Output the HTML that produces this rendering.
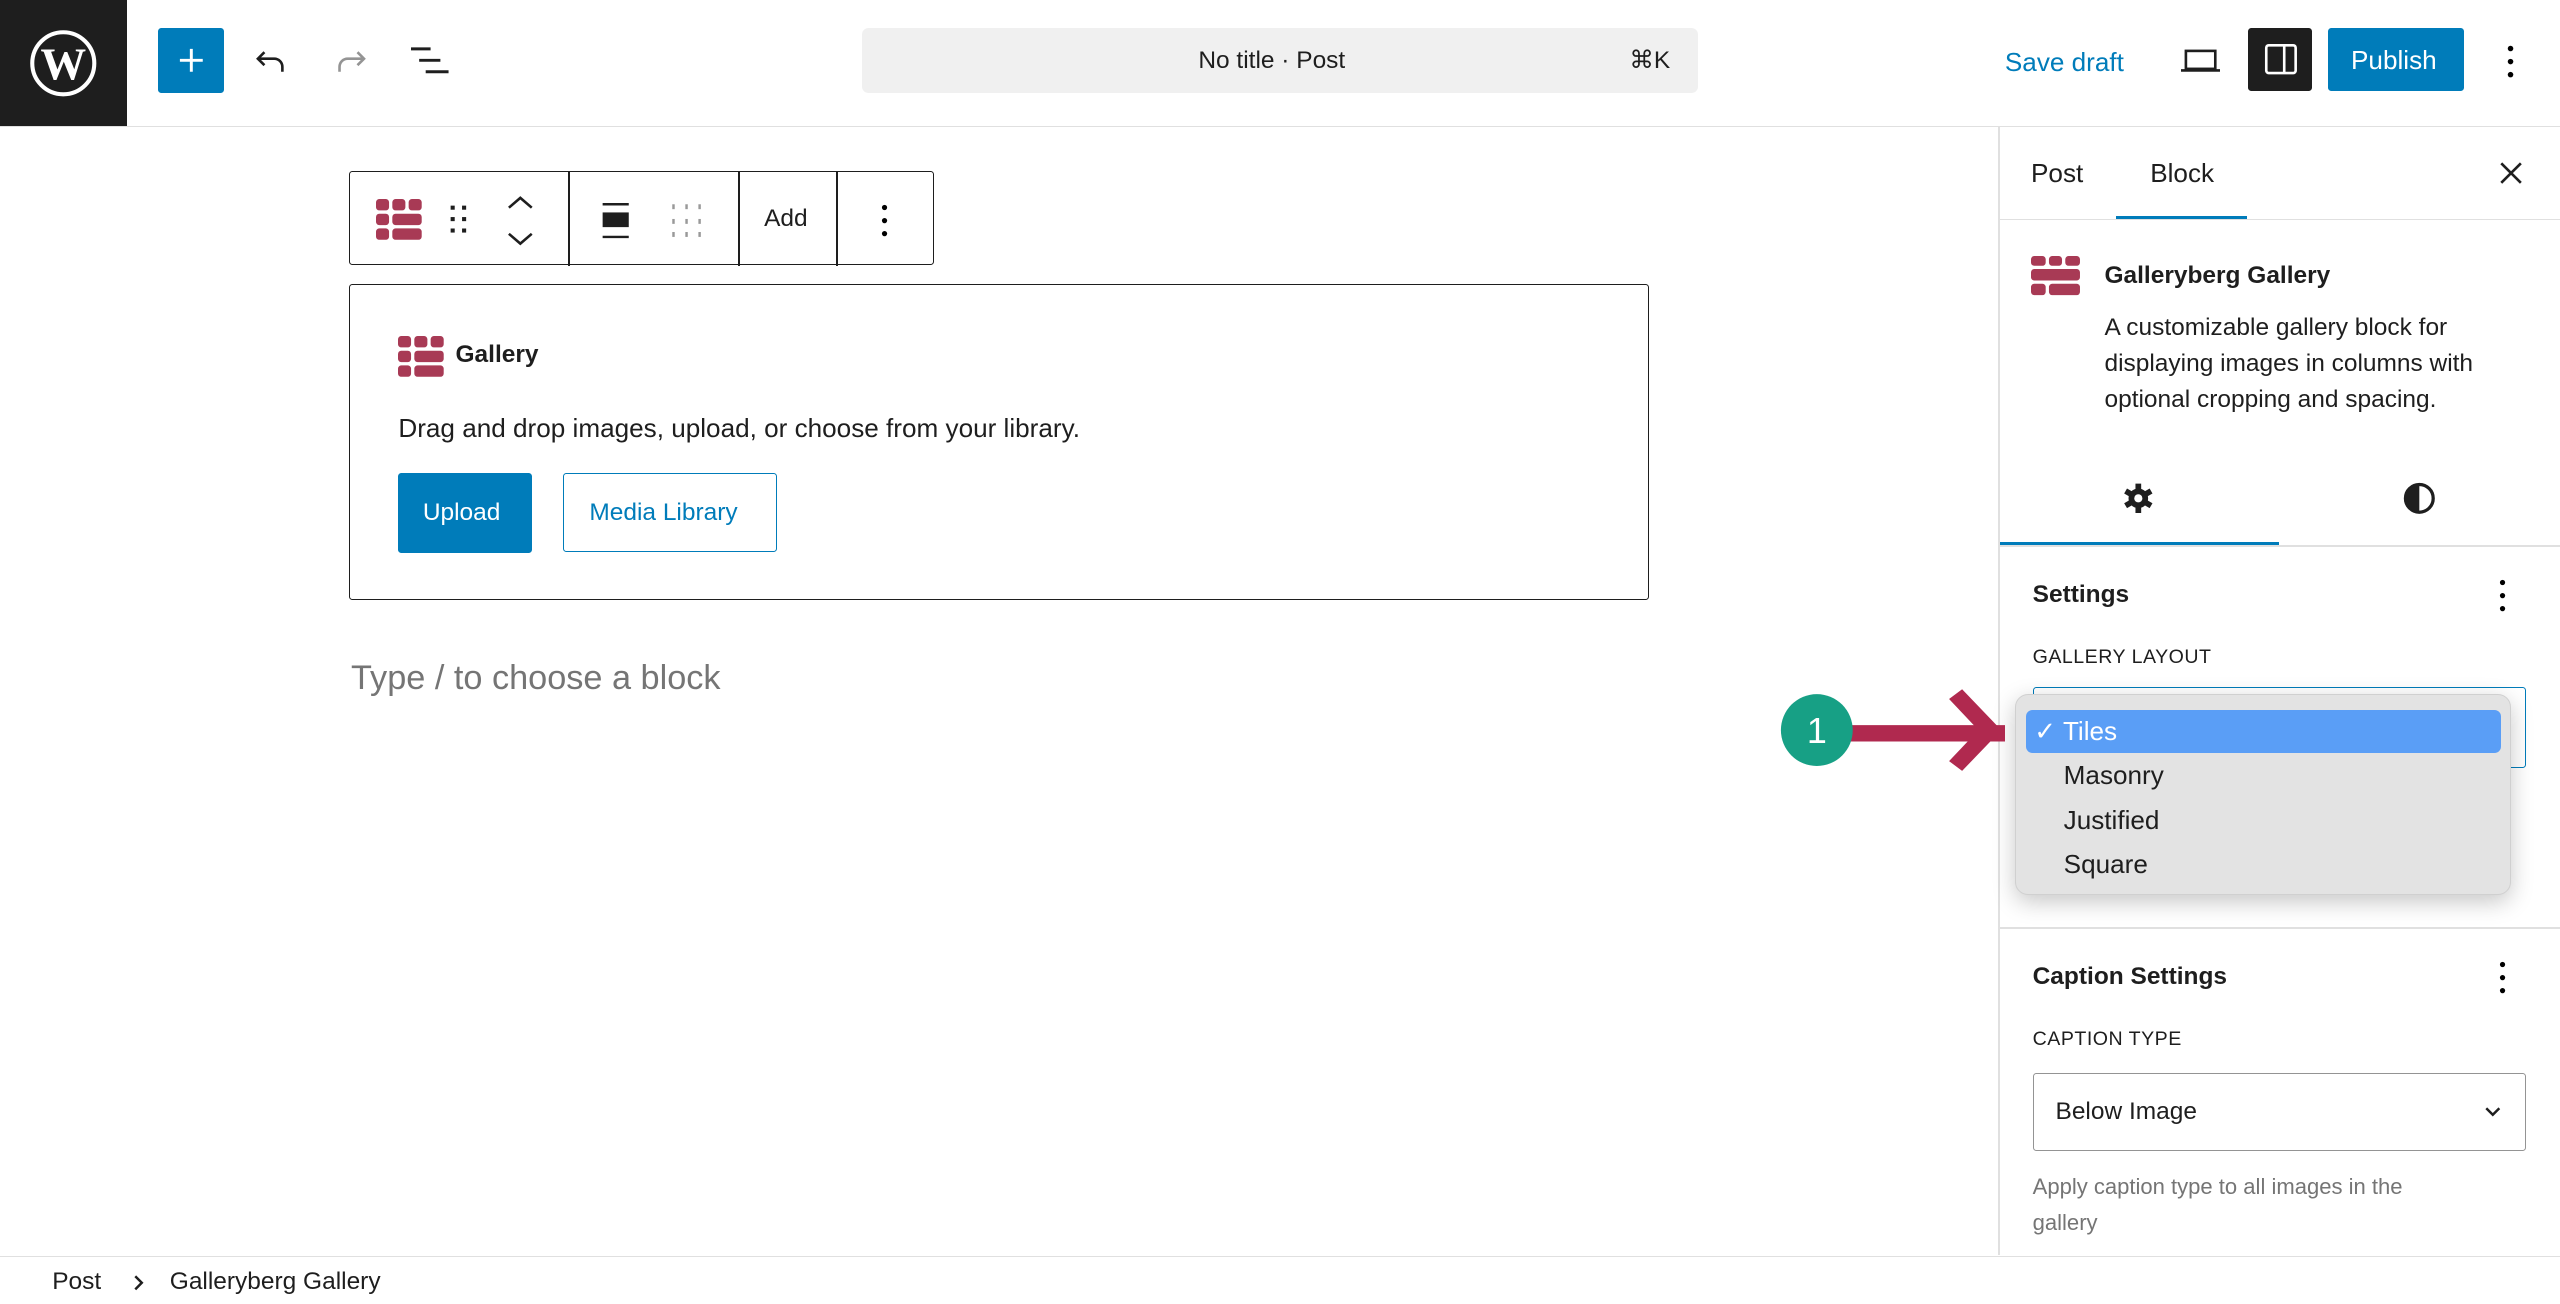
<!DOCTYPE html>
<html><head><meta charset="utf-8">
<style>
html,body{margin:0;padding:0;background:#fff;overflow:hidden}
body{width:2560px;height:1304px}
#r{position:relative;width:1568px;height:799px;zoom:1.632653;font-family:"Liberation Sans",sans-serif;color:#1e1e1e;overflow:hidden}
.a{position:absolute}
.t{position:absolute;white-space:nowrap;line-height:1}
</style></head><body><div id="r">
<!-- top bar -->
<div class="a" style="left:0;top:0;width:1568px;height:77px;border-bottom:1px solid #e0e0e0"></div>
<div class="a" style="left:0;top:0;width:78px;height:77px;background:#1e1e1e"></div>
<svg class="a" style="left:18px;top:18px" width="42" height="42" viewBox="0 0 42 42"><circle cx="21" cy="21" r="19" fill="none" stroke="#fff" stroke-width="2.5"/><text x="21" y="31" text-anchor="middle" font-family="Liberation Serif" font-weight="bold" font-size="28" fill="#fff">W</text></svg>
<div class="a" style="left:97px;top:17px;width:40px;height:40px;background:#007cba;border-radius:2px"></div>
<svg class="a" style="left:107px;top:27px" width="20" height="20"><path d="M10 3v14M3 10h14" stroke="#fff" stroke-width="1.8"/></svg>
<svg class="a" style="left:155px;top:27px" width="22" height="22" viewBox="0 0 22 22"><path d="M7 5L3 9l4 4M3 9h10a5 5 0 0 1 5 5v3" fill="none" stroke="#1e1e1e" stroke-width="1.6"/></svg>
<svg class="a" style="left:204px;top:27px" width="22" height="22" viewBox="0 0 22 22"><path d="M15 5l4 4-4 4M19 9H9a5 5 0 0 0-5 5v3" fill="none" stroke="#949494" stroke-width="1.6"/></svg>
<svg class="a" style="left:252px;top:27px" width="24" height="22"><path d="M0 3h12M5 10h13M9 17h14" stroke="#1e1e1e" stroke-width="1.8"/></svg>
<div class="a" style="left:528px;top:17px;width:512px;height:40px;background:#f0f0f0;border-radius:4px"></div>
<div class="t" style="left:734px;top:30px;font-size:15px">No title · Post</div>
<div class="t" style="left:998px;top:30px;font-size:15px">⌘K</div>
<div class="t" style="left:1228px;top:30px;font-size:16px;color:#007cba">Save draft</div>
<svg class="a" style="left:1336px;top:28px" width="24" height="18"><rect x="3" y="3" width="18" height="11" fill="none" stroke="#1e1e1e" stroke-width="1.6"/><path d="M0 15h24" stroke="#1e1e1e" stroke-width="1.6"/></svg>
<div class="a" style="left:1377px;top:17px;width:39px;height:39px;background:#1e1e1e;border-radius:2px"></div>
<svg class="a" style="left:1386px;top:26px" width="22" height="22"><rect x="2" y="2" width="18" height="17" rx="1.5" fill="none" stroke="#fff" stroke-width="1.6"/><path d="M13 2v17" stroke="#fff" stroke-width="1.6"/></svg>
<div class="a" style="left:1426px;top:17px;width:83px;height:39px;background:#007cba;border-radius:2px"></div>
<div class="t" style="left:1440px;top:29px;font-size:16px;color:#fff">Publish</div>
<svg class="a" style="left:1534px;top:26px" width="8" height="24"><circle cx="4" cy="4" r="1.7"/><circle cx="4" cy="12" r="1.7"/><circle cx="4" cy="20" r="1.7"/></svg>

<!-- editor toolbar -->
<div class="a" style="left:214px;top:105px;width:357px;height:56px;border:1px solid #1e1e1e;border-radius:2px"></div>
<div class="a" style="left:348px;top:105px;width:1px;height:58px;background:#1e1e1e"></div>
<div class="a" style="left:452px;top:105px;width:1px;height:58px;background:#1e1e1e"></div>
<div class="a" style="left:512px;top:105px;width:1px;height:58px;background:#1e1e1e"></div>
<svg class="a" style="left:230px;top:122px" width="30" height="25" viewBox="0 0 30 25"><g fill="#a83a55"><rect x="0" y="0" width="8" height="7" rx="2"/><rect x="10" y="0" width="8" height="7" rx="2"/><rect x="20" y="0" width="8" height="7" rx="2"/><rect x="0" y="9" width="8" height="7" rx="2"/><rect x="10" y="9" width="18" height="7" rx="2"/><rect x="0" y="18" width="8" height="7" rx="2"/><rect x="10" y="18" width="18" height="7" rx="2"/></g></svg>
<svg class="a" style="left:275px;top:125px" width="14" height="20"><g fill="#1e1e1e"><rect x="1" y="1" width="2.5" height="2.5"/><rect x="8" y="1" width="2.5" height="2.5"/><rect x="1" y="8" width="2.5" height="2.5"/><rect x="8" y="8" width="2.5" height="2.5"/><rect x="1" y="15" width="2.5" height="2.5"/><rect x="8" y="15" width="2.5" height="2.5"/></g></svg>
<svg class="a" style="left:309px;top:118px" width="20" height="34"><path d="M3 9l7-6 7 6M3 25l7 6 7-6" fill="none" stroke="#1e1e1e" stroke-width="1.6"/></svg>
<svg class="a" style="left:368px;top:123px" width="20" height="24"><path d="M1 2h16M1 22h16" stroke="#1e1e1e" stroke-width="1.5"/><rect x="1" y="7" width="16" height="9" fill="#1e1e1e"/></svg>
<svg class="a" style="left:410px;top:123px" width="24" height="24"><g fill="#999"><rect x="2" y="2" width="1.5" height="3"/><rect x="10" y="2" width="1.5" height="3"/><rect x="18" y="2" width="1.5" height="3"/><rect x="2" y="11" width="1.5" height="3"/><rect x="10" y="11" width="1.5" height="3"/><rect x="18" y="11" width="1.5" height="3"/><rect x="2" y="19" width="1.5" height="3"/><rect x="10" y="19" width="1.5" height="3"/><rect x="18" y="19" width="1.5" height="3"/></g></svg>
<div class="t" style="left:468px;top:127px;font-size:15px">Add</div>
<svg class="a" style="left:538px;top:123px" width="8" height="24"><circle cx="4" cy="4" r="1.6"/><circle cx="4" cy="12" r="1.6"/><circle cx="4" cy="20" r="1.6"/></svg>

<!-- block -->
<div class="a" style="left:214px;top:174px;width:795px;height:192px;border:1px solid #1e1e1e;border-radius:2px"></div>
<svg class="a" style="left:244px;top:206px" width="30" height="25" viewBox="0 0 30 25"><g fill="#a83a55"><rect x="0" y="0" width="8" height="7" rx="2"/><rect x="10" y="0" width="8" height="7" rx="2"/><rect x="20" y="0" width="8" height="7" rx="2"/><rect x="0" y="9" width="8" height="7" rx="2"/><rect x="10" y="9" width="18" height="7" rx="2"/><rect x="0" y="18" width="8" height="7" rx="2"/><rect x="10" y="18" width="18" height="7" rx="2"/></g></svg>
<div class="t" style="left:279px;top:210px;font-size:15px;font-weight:bold">Gallery</div>
<div class="t" style="left:244px;top:254px;font-size:16px">Drag and drop images, upload, or choose from your library.</div>
<div class="a" style="left:244px;top:290px;width:82px;height:49px;background:#007cba;border-radius:2px"></div>
<div class="t" style="left:259px;top:307px;font-size:15px;color:#fff">Upload</div>
<div class="a" style="left:345px;top:290px;width:130px;height:47px;border:1px solid #007cba;border-radius:2px"></div>
<div class="t" style="left:361px;top:307px;font-size:15px;color:#007cba">Media Library</div>
<div class="t" style="left:215px;top:405px;font-size:21px;color:#757575">Type / to choose a block</div>

<!-- sidebar -->
<div class="a" style="left:1224px;top:77px;width:1px;height:692px;background:#e0e0e0"></div>
<div class="a" style="left:1225px;top:134px;width:343px;height:1px;background:#e0e0e0"></div>
<div class="t" style="left:1244px;top:98px;font-size:16px">Post</div>
<div class="t" style="left:1317px;top:98px;font-size:16px">Block</div>
<div class="a" style="left:1296px;top:132px;width:80px;height:2px;background:#007cba"></div>
<svg class="a" style="left:1530px;top:98px" width="16" height="16"><path d="M2 2l12 12M14 2L2 14" stroke="#1e1e1e" stroke-width="1.6"/></svg>
<svg class="a" style="left:1244px;top:157px" width="30" height="25" viewBox="0 0 30 25"><g fill="#a83a55"><rect x="0" y="0" width="9" height="6" rx="2"/><rect x="11" y="0" width="8" height="6" rx="2"/><rect x="21" y="0" width="9" height="6" rx="2"/><rect x="0" y="8" width="30" height="7" rx="2"/><rect x="0" y="17" width="9" height="7" rx="2"/><rect x="11" y="17" width="19" height="7" rx="2"/></g></svg>
<div class="t" style="left:1289px;top:162px;font-size:15px;font-weight:bold">Galleryberg Gallery</div>
<div class="a" style="left:1289px;top:190px;font-size:15px;line-height:22px;width:270px">A customizable gallery block for displaying images in columns with optional cropping and spacing.</div>
<svg class="a" style="left:1300px;top:295px" width="20" height="20" viewBox="0 0 20 20"><circle cx="10" cy="10" r="6" fill="#1e1e1e"/><g stroke="#1e1e1e" stroke-width="3.5"><path d="M10 1v18M2.2 5.5l15.6 9M2.2 14.5l15.6-9"/></g><circle cx="10" cy="10" r="2.5" fill="#fff"/></svg>
<svg class="a" style="left:1472px;top:295px" width="20" height="20"><circle cx="10" cy="10" r="8.5" fill="none" stroke="#1e1e1e" stroke-width="2"/><path d="M10 1.5a8.5 8.5 0 0 0 0 17z" fill="#1e1e1e"/></svg>
<div class="a" style="left:1225px;top:334px;width:343px;height:1px;background:#e0e0e0"></div>
<div class="a" style="left:1225px;top:332px;width:171px;height:2px;background:#007cba"></div>
<div class="t" style="left:1245px;top:357px;font-size:15px;font-weight:bold">Settings</div>
<svg class="a" style="left:1529px;top:353px" width="8" height="24"><circle cx="4" cy="4" r="1.6"/><circle cx="4" cy="12" r="1.6"/><circle cx="4" cy="20" r="1.6"/></svg>
<div class="t" style="left:1245px;top:397px;font-size:12px;letter-spacing:.3px">GALLERY LAYOUT</div>
<div class="a" style="left:1245px;top:421px;width:301px;height:48px;border:1px solid #007cba;border-radius:2px"></div>
<div class="a" style="left:1248px;top:540px;width:30px;height:8px;background:#ccc;border-radius:4px"></div>
<div class="a" style="left:1225px;top:568px;width:343px;height:1px;background:#e0e0e0"></div>
<div class="t" style="left:1245px;top:591px;font-size:15px;font-weight:bold">Caption Settings</div>
<svg class="a" style="left:1529px;top:587px" width="8" height="24"><circle cx="4" cy="4" r="1.6"/><circle cx="4" cy="12" r="1.6"/><circle cx="4" cy="20" r="1.6"/></svg>
<div class="t" style="left:1245px;top:631px;font-size:12px;letter-spacing:.3px">CAPTION TYPE</div>
<div class="a" style="left:1245px;top:657px;width:301px;height:47px;border:1px solid #949494;border-radius:2px"></div>
<div class="t" style="left:1259px;top:674px;font-size:15px">Below Image</div>
<svg class="a" style="left:1521px;top:677px" width="12" height="8"><path d="M2 2l4 4 4-4" fill="none" stroke="#1e1e1e" stroke-width="1.5"/></svg>
<div class="a" style="left:1245px;top:716px;font-size:13.5px;line-height:22px;color:#757575;width:266px">Apply caption type to all images in the gallery</div>

<!-- dropdown -->
<div class="a" style="left:1234px;top:425px;width:304px;height:123px;background:#e3e3e3;border-radius:8px;box-shadow:0 4px 14px rgba(0,0,0,.22);border:1px solid #d0d0d0;box-sizing:border-box"></div>
<div class="a" style="left:1241px;top:435px;width:291px;height:26px;background:#5a9ef6;border-radius:4px"></div>
<div class="t" style="left:1246px;top:440px;font-size:16px;color:#fff">✓ Tiles</div>
<div class="t" style="left:1264px;top:467px;font-size:16px">Masonry</div>
<div class="t" style="left:1264px;top:494px;font-size:16px">Justified</div>
<div class="t" style="left:1264px;top:521px;font-size:16px">Square</div>

<!-- annotation -->
<svg class="a" style="left:1088px;top:420px" width="140" height="56"><path d="M40 24h118v10H40z" fill="#b0294f"/><path d="M106 8l8-6 24 25-24 25-8-6 18-19z" fill="#b0294f"/><circle cx="25" cy="27" r="22" fill="#17a085"/><text x="25" y="35" text-anchor="middle" font-family="Liberation Sans" font-size="22" fill="#fff">1</text></svg>

<!-- footer -->
<div class="a" style="left:0;top:769px;width:1568px;height:1px;background:#e0e0e0"></div>
<div class="t" style="left:32px;top:778px;font-size:15px">Post</div>
<svg class="a" style="left:81px;top:780px" width="8" height="12"><path d="M2 2l4 4-4 4" fill="none" stroke="#1e1e1e" stroke-width="1.5"/></svg>
<div class="t" style="left:104px;top:778px;font-size:15px">Galleryberg Gallery</div>
</div></body></html>
